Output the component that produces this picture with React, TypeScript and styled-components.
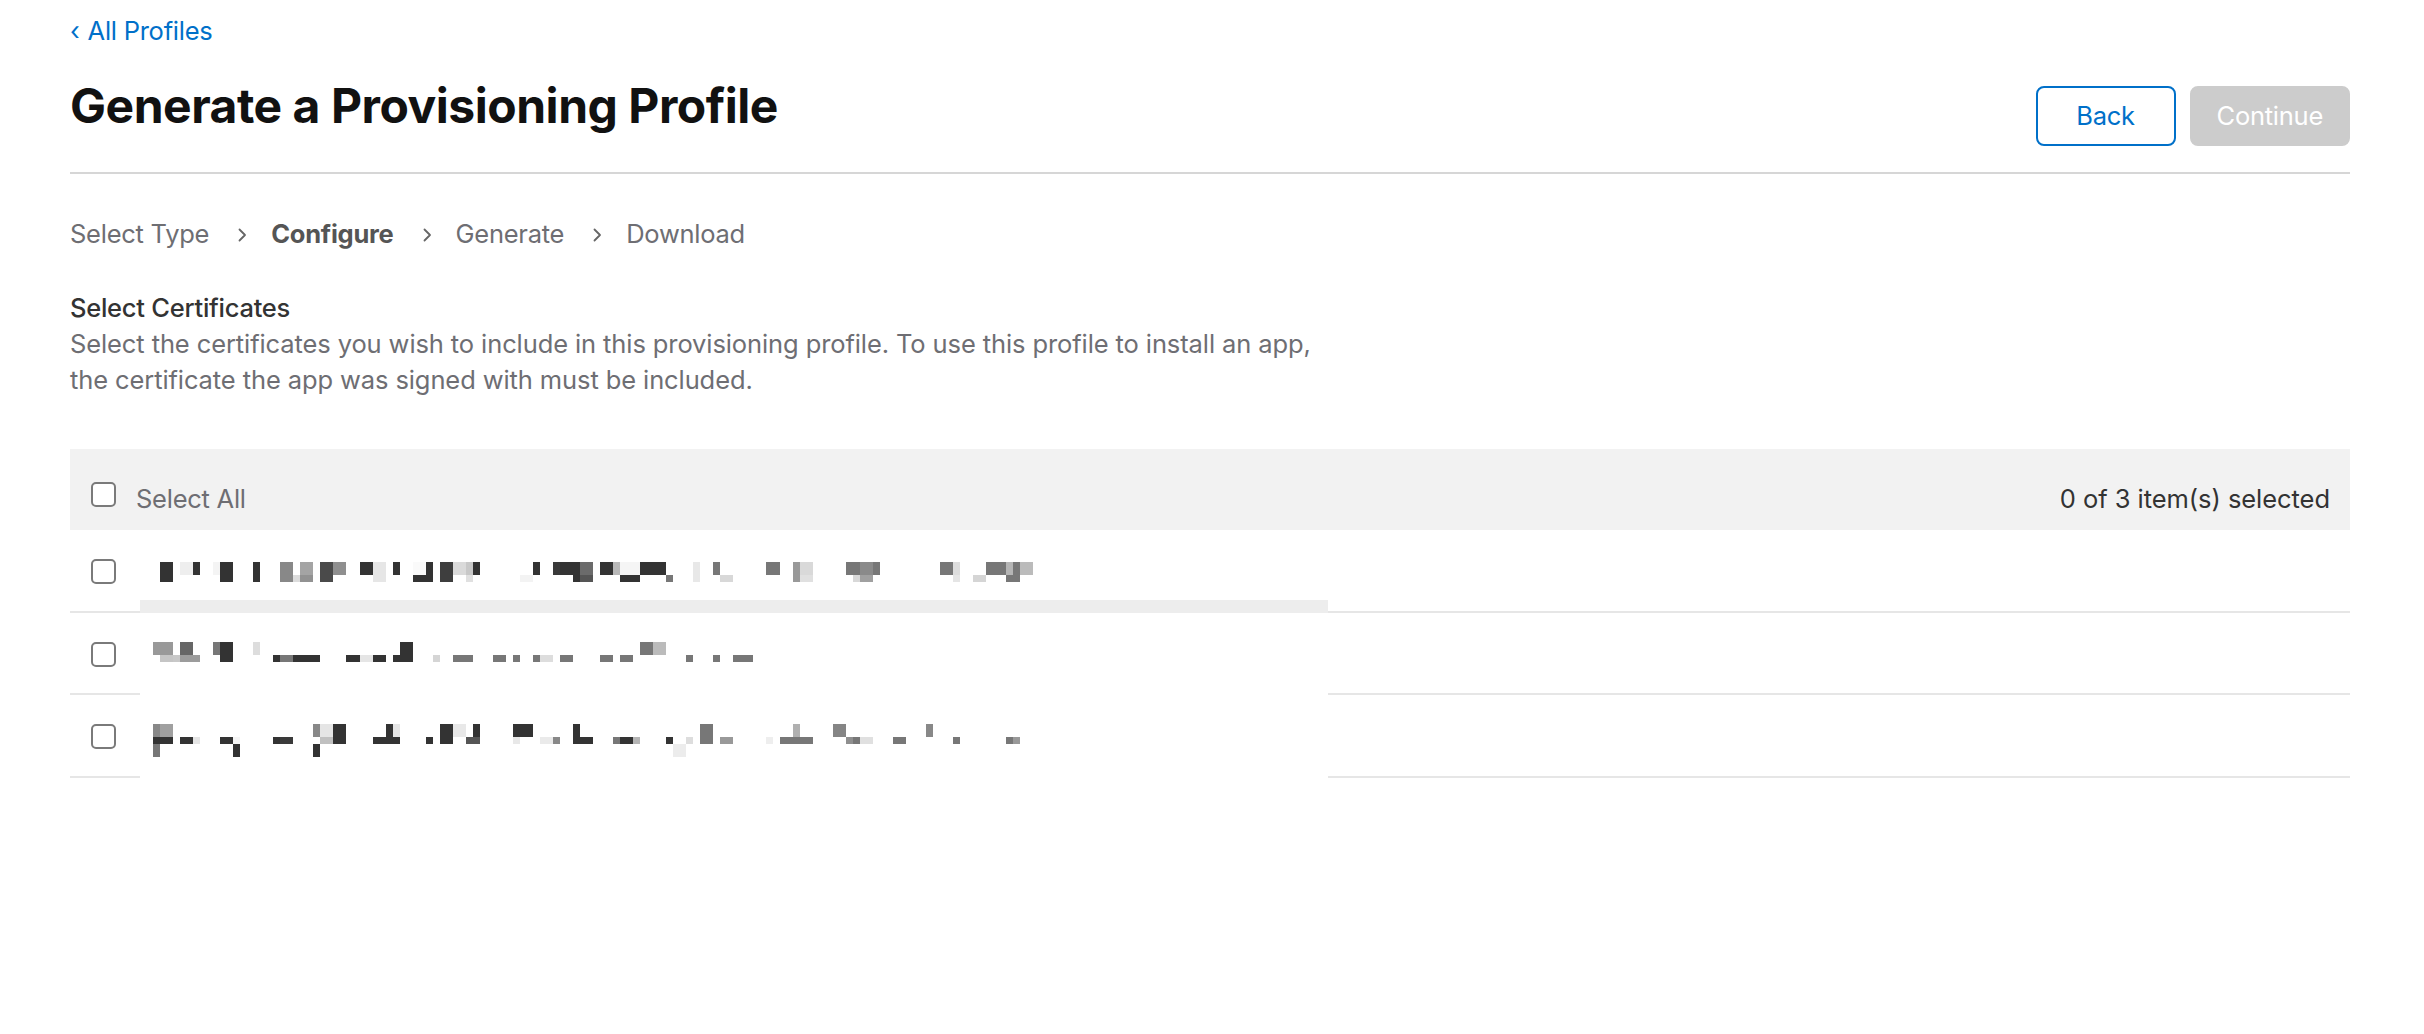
import React from "react";
import styled, { createGlobalStyle } from "styled-components";

const GlobalStyle = createGlobalStyle`
  html, body { margin: 0; padding: 0; background: #ffffff; }
  body {
    font-family: Inter, "Noto Sans", "Liberation Sans", sans-serif;
    -webkit-font-smoothing: antialiased;
  }
  * { box-sizing: border-box; }
`;

const TRACK = "-0.01em";

const Page = styled.main`
  padding: 13px 74px 40px 70px;
`;

const BackLink = styled.a`
  display: inline-block;
  font-size: 25.5px;
  line-height: 35.7px;
  color: #0070c9;
  text-decoration: none;
  letter-spacing: ${TRACK};
`;

const LinkChevron = styled.span`
  margin-right: 8px;
`;

const HeaderRow = styled.header`
  display: flex;
  justify-content: space-between;
  align-items: flex-start;
  margin-top: 31px;
  padding-bottom: 26px;
  border-bottom: 2px solid #d6d6d6;
`;

const Title = styled.h1`
  margin: 0;
  font-size: 48px;
  line-height: 52.8px;
  font-weight: 700;
  color: #111111;
  letter-spacing: -0.01em;
`;

const ButtonGroup = styled.div`
  display: flex;
  gap: 14px;
  padding-top: 6px;
`;

const Button = styled.button<{ $variant: "secondary" | "disabled" }>`
  height: 60px;
  min-width: 140px;
  padding: 0 25px;
  border-radius: 8px;
  font-family: inherit;
  font-size: 25.5px;
  letter-spacing: ${TRACK};
  border: 2px solid ${(p) => (p.$variant === "secondary" ? "#0070c9" : "#cccccc")};
  background: ${(p) => (p.$variant === "secondary" ? "#ffffff" : "#cccccc")};
  color: ${(p) => (p.$variant === "secondary" ? "#0070c9" : "#ffffff")};
  cursor: ${(p) => (p.$variant === "secondary" ? "pointer" : "default")};
`;

const Steps = styled.nav`
  display: flex;
  align-items: center;
  margin-top: 42px;
  font-size: 25.5px;
  line-height: 35.7px;
  letter-spacing: ${TRACK};
`;

const Step = styled.span<{ $current?: boolean }>`
  color: ${(p) => (p.$current ? "#555555" : "#6e6e73")};
  font-weight: ${(p) => (p.$current ? 700 : 400)};
`;

const StepChevron = styled.svg`
  width: 9px;
  height: 14px;
  margin: 2px 24px 0 29px;
  flex: none;
`;

const SectionTitle = styled.h2`
  margin: 39px 0 0;
  font-size: 25.5px;
  line-height: 35.7px;
  font-weight: 500;
  color: #333333;
  letter-spacing: ${TRACK};
`;

const Description = styled.p`
  margin: 0;
  font-size: 25.5px;
  line-height: 35.5px;
  color: #6e6e73;
  letter-spacing: -0.004em;
`;

const Table = styled.section`
  margin-top: 52px;
`;

const TableHeader = styled.div`
  display: flex;
  align-items: center;
  height: 81px;
  padding: 10px 20px 0 21px;
  background: #f2f2f2;
  font-size: 25.5px;
  line-height: 35.7px;
  letter-spacing: ${TRACK};
`;

const SelectAllLabel = styled.label`
  display: flex;
  align-items: center;
  gap: 20px;
  color: #6e6e73;
`;

const HeaderText = styled.span`
  margin-top: 8px;
`;

const Counter = styled.span`
  margin-left: auto;
  margin-top: 8px;
  color: #333333;
  letter-spacing: -0.002em;
`;

const Checkbox = styled.input.attrs({ type: "checkbox" })`
  appearance: none;
  -webkit-appearance: none;
  margin: 0;
  width: 25px;
  height: 25px;
  border: 2px solid #7a7a7a;
  border-radius: 5px;
  background: #ffffff;
  flex: none;
`;

const Row = styled.div`
  display: grid;
  grid-template-columns: 70px 1188px 1fr;
  height: 82.5px;
`;

const CheckCell = styled.div`
  display: flex;
  align-items: center;
  padding: 3px 0 0 21px;
  border-bottom: 2px solid #e6e6e6;
`;

const NameCell = styled.div<{ $strip?: boolean }>`
  display: flex;
  align-items: center;
  padding: 2px 0 0 13.33px;
  background: #ffffff;
  box-shadow: ${(p) => (p.$strip ? "inset 0 -13px 0 #ededed" : "none")};
`;

const RestCell = styled.div`
  border-bottom: 2px solid #e6e6e6;
`;

const Mosaic = styled.svg`
  display: block;
  flex: none;
`;

type Cell = [number, number, number, number, string];
const D = "#333333";

const row1: Cell[] = [
  [0, 0, 2, 3, D], [3, 0, 2, 2, "#eeeeee"], [5, 0, 1, 2, D], [8, 0, 1, 2, "#f4f4f4"],
  [9, 0, 2, 3, D], [14, 0, 1, 3, D], [18, 0, 2, 3, "#888888"], [20, 2, 1, 1, "#dcdcdc"],
  [21, 0, 2, 2, "#a4a4a4"], [21, 2, 2, 1, "#929292"], [24, 0, 2, 3, "#4a4a4a"],
  [26, 0, 2, 2, "#8f8f8f"], [30, 0, 2, 2, D], [32, 0, 2, 3, "#e6e6e6"], [35, 0, 1, 2, D],
  [38, 0, 2, 2, "#fafafa"], [38, 2, 3, 1, D], [40, 0, 1, 3, D], [42, 0, 2, 3, "#3e3e3e"],
  [44, 0, 2, 2, "#dadada"], [46, 0, 1, 2, "#c8c8c8"], [46, 2, 1, 1, "#e0e0e0"],
  [47, 0, 1, 2, D], [54, 2, 2, 1, "#f3f3f3"], [56, 0, 1, 2, D], [59, 0, 1, 2, "#3a3a3a"],
  [60, 0, 3, 2, D], [62, 2, 1, 1, D], [63, 0, 2, 2, "#6b6b6b"], [63, 2, 2, 1, "#555555"],
  [66, 0, 2, 2, D], [68, 0, 1, 2, "#b8b8b8"], [69, 0, 3, 2, "#f5f5f5"], [69, 2, 3, 1, D],
  [72, 0, 4, 2, D], [76, 2, 1, 1, "#777777"], [80, 0, 1, 3, "#e8e8e8"], [83, 0, 1, 2, "#777777"],
  [84, 2, 2, 1, "#d8d8d8"], [91, 0, 2, 2, "#777777"], [95, 0, 1, 3, "#999999"],
  [96, 0, 2, 2, "#d9d9d9"], [96, 2, 2, 1, "#e0e0e0"], [103, 0, 2, 2, "#777777"],
  [104, 2, 1, 1, "#d8d8d8"], [105, 0, 2, 2, "#8a8a8a"], [105, 2, 2, 1, "#a0a0a0"],
  [107, 0, 1, 2, "#777777"], [117, 0, 2, 2, "#777777"], [119, 0, 1, 2, "#dddddd"],
  [119, 2, 1, 1, "#e5e5e5"], [122, 2, 2, 1, "#d5d5d5"], [124, 0, 3, 2, "#777777"],
  [127, 0, 1, 2, "#b5b5b5"], [127, 2, 1, 1, "#777777"], [128, 0, 1, 3, "#777777"],
  [129, 0, 2, 2, "#bbbbbb"],
];

const row2: Cell[] = [
  [-1, 0, 3, 2, "#999999"], [0, 2, 2, 1, "#c5c5c5"], [2, 2, 1, 1, "#c8c8c8"],
  [3, 0, 2, 2, "#666666"], [3, 2, 3, 1, "#9c9c9c"], [8, 0, 1, 2, "#777777"], [9, 0, 2, 3, D],
  [14, 0, 1, 2, "#dddddd"], [17, 2, 1, 1, D], [18, 2, 2, 1, "#777777"], [20, 2, 4, 1, D],
  [28, 2, 2, 1, D], [30, 2, 2, 1, "#e5e5e5"], [32, 2, 2, 1, D], [35, 2, 1, 1, D],
  [36, 0, 2, 3, D], [41, 2, 1, 1, "#d5d5d5"], [44, 2, 3, 1, "#777777"], [50, 2, 2, 1, "#777777"],
  [53, 2, 1, 1, "#777777"], [56, 2, 1, 1, "#777777"], [57, 2, 2, 1, "#dddddd"],
  [60, 2, 2, 1, "#777777"], [66, 2, 2, 1, "#777777"], [69, 2, 2, 1, "#777777"],
  [72, 0, 2, 2, "#777777"], [74, 0, 2, 2, "#bbbbbb"], [79, 2, 1, 1, "#777777"],
  [83, 2, 1, 1, "#777777"], [86, 2, 3, 1, "#777777"],
];

const row3: Cell[] = [
  [-1, 0, 1, 2, "#888888"], [-1, 2, 1, 1, D], [-1, 3, 1, 2, "#777777"], [0, 0, 2, 2, "#a0a0a0"],
  [0, 2, 2, 1, D], [3, 2, 2, 1, D], [5, 2, 1, 1, "#e5e5e5"], [9, 2, 2, 1, D],
  [11, 2, 1, 1, "#f5f5f5"], [11, 3, 1, 2, D], [17, 2, 1, 1, D], [18, 2, 2, 1, "#3a3a3a"],
  [23, 0, 1, 2, "#888888"], [23, 3, 1, 2, D], [24, 0, 2, 2, "#e5e5e5"], [24, 2, 2, 1, "#c0c0c0"],
  [26, 0, 2, 3, D], [32, 2, 4, 1, D], [34, 0, 1, 2, D], [35, 0, 1, 2, "#e5e5e5"],
  [40, 2, 1, 1, D], [42, 0, 2, 3, D], [44, 0, 2, 2, "#e8e8e8"], [46, 2, 2, 1, "#555555"],
  [47, 0, 1, 2, D], [53, 0, 3, 2, D], [53, 2, 1, 1, "#e8e8e8"], [57, 2, 2, 1, "#eaeaea"],
  [59, 2, 1, 1, "#888888"], [62, 0, 1, 3, D], [63, 2, 2, 1, D], [68, 2, 1, 1, "#777777"],
  [69, 2, 2, 1, D], [71, 2, 1, 1, "#b5b5b5"], [76, 2, 1, 1, D], [77, 3, 2, 2, "#ececec"],
  [79, 2, 1, 1, "#dddddd"], [81, 0, 2, 3, "#777777"], [84, 2, 2, 1, "#999999"],
  [91, 2, 1, 1, "#eeeeee"], [93, 2, 5, 1, "#777777"], [95, 0, 1, 2, "#b0b0b0"],
  [101, 0, 2, 2, "#858585"], [103, 2, 1, 1, "#8f8f8f"], [104, 2, 1, 1, "#777777"],
  [105, 2, 2, 1, "#e0e0e0"], [110, 2, 2, 1, "#777777"], [115, 0, 1, 2, "#888888"],
  [119, 2, 1, 1, "#777777"], [127, 2, 1, 1, "#777777"], [128, 2, 1, 1, "#999999"],
];

const UNIT = 20 / 3;

type Cert = { cells: Cell[]; top: number; rows: number; strip?: boolean };

const certificates: Cert[] = [
  { cells: row1, top: 0, rows: 3, strip: true },
  { cells: row2, top: 0, rows: 4 },
  { cells: row3, top: -1, rows: 6 },
];

function Redacted({ cert }: { cert: Cert }) {
  const cols = 132;
  return (
    <Mosaic
      width={cols * UNIT}
      height={cert.rows * UNIT}
      viewBox={`-1 ${cert.top} ${cols} ${cert.rows}`}
      shapeRendering="crispEdges"
      aria-hidden="true"
    >
      {cert.cells.map(([x, y, w, h, c], i) => (
        <rect key={i} x={x} y={y} width={w} height={h} fill={c} />
      ))}
    </Mosaic>
  );
}

function Chevron() {
  return (
    <StepChevron viewBox="0 0 9 14" aria-hidden="true">
      <polyline
        points="1.5,1.5 7,7 1.5,12.5"
        fill="none"
        stroke="#666666"
        strokeWidth="1.8"
        strokeLinecap="round"
        strokeLinejoin="round"
      />
    </StepChevron>
  );
}

const steps = ["Select Type", "Configure", "Generate", "Download"];

export default function App() {
  return (
    <>
      <GlobalStyle />
      <Page>
        <BackLink href="#">
          <LinkChevron>‹</LinkChevron>All Profiles
        </BackLink>
        <HeaderRow>
          <Title>Generate a Provisioning Profile</Title>
          <ButtonGroup>
            <Button $variant="secondary">Back</Button>
            <Button $variant="disabled" disabled>
              Continue
            </Button>
          </ButtonGroup>
        </HeaderRow>

        <Steps>
          {steps.map((s, i) => (
            <React.Fragment key={s}>
              {i > 0 && <Chevron />}
              <Step $current={s === "Configure"}>{s}</Step>
            </React.Fragment>
          ))}
        </Steps>

        <SectionTitle>Select Certificates</SectionTitle>
        <Description>
          Select the certificates you wish to include in this provisioning profile. To use this profile to install an app,
          <br />
          the certificate the app was signed with must be included.
        </Description>

        <Table>
          <TableHeader>
            <SelectAllLabel>
              <Checkbox />
              <HeaderText>Select All</HeaderText>
            </SelectAllLabel>
            <Counter>0 of 3 item(s) selected</Counter>
          </TableHeader>
          {certificates.map((cert, i) => (
            <Row key={i}>
              <CheckCell>
                <Checkbox />
              </CheckCell>
              <NameCell $strip={cert.strip}>
                <Redacted cert={cert} />
              </NameCell>
              <RestCell />
            </Row>
          ))}
        </Table>
      </Page>
    </>
  );
}
